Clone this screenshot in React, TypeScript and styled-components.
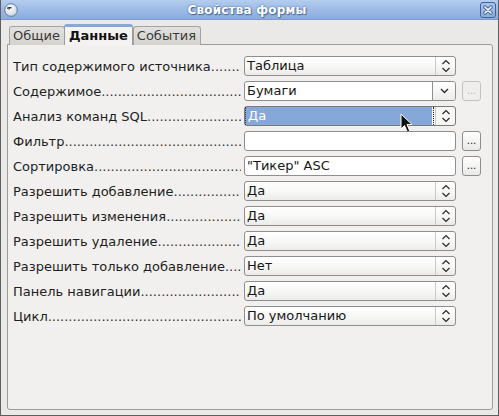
import React from "react"
import styled, { createGlobalStyle, css } from "styled-components"

const GlobalStyle = createGlobalStyle`
  html, body {
    margin: 0;
    padding: 0;
    background: #eae9e7;
  }
  body {
    font-family: "DejaVu Sans", "Liberation Sans", sans-serif;
  }
`

type Kind = "spin" | "combo" | "text" | "selected"

type Row = {
  label: string
  value: string
  kind: Kind
  button?: "on" | "off"
}

const rows: Row[] = [
  { label: "Тип содержимого источника", value: "Таблица", kind: "spin" },
  { label: "Содержимое", value: "Бумаги", kind: "combo", button: "off" },
  { label: "Анализ команд SQL", value: "Да", kind: "selected" },
  { label: "Фильтр", value: "", kind: "text", button: "on" },
  { label: "Сортировка", value: "\"Тикер\" ASC", kind: "text", button: "on" },
  { label: "Разрешить добавление", value: "Да", kind: "spin" },
  { label: "Разрешить изменения", value: "Да", kind: "spin" },
  { label: "Разрешить удаление", value: "Да", kind: "spin" },
  { label: "Разрешить только добавление", value: "Нет", kind: "spin" },
  { label: "Панель навигации", value: "Да", kind: "spin" },
  { label: "Цикл", value: "По умолчанию", kind: "spin" },
]

const SpinIcon = () => (
  <svg width="10" height="14" viewBox="0 0 10 14">
    <path d="M1.5 5 L5 1.5 L8.5 5" fill="none" stroke="#2a2a2a" strokeWidth="1.2" />
    <path d="M1.5 9 L5 12.5 L8.5 9" fill="none" stroke="#2a2a2a" strokeWidth="1.2" />
  </svg>
)

const DownIcon = () => (
  <svg width="9" height="6" viewBox="0 0 9 6">
    <path d="M1 1 L4.5 4.5 L8 1" fill="none" stroke="#2a2a2a" strokeWidth="1.3" />
  </svg>
)

const Cursor = () => (
  <svg width="14" height="21" viewBox="0 0 14 21">
    <path
      d="M1 1 L1 16 L4.5 12.5 L7.5 19.5 L10 18.5 L7 11.5 L12 11.5 Z"
      fill="#111"
      stroke="#fff"
      strokeWidth="1"
      strokeLinejoin="round"
    />
  </svg>
)

const App = () => {
  return (
    <>
      <GlobalStyle />
      <Window>
        <TitleBar>
          <AppIcon>
            <svg width="14" height="14" viewBox="0 0 14 14">
              <defs>
                <radialGradient id="g" cx="40%" cy="35%" r="70%">
                  <stop offset="0" stopColor="#ffffff" />
                  <stop offset="1" stopColor="#c9d4e2" />
                </radialGradient>
              </defs>
              <circle cx="7" cy="7" r="6.3" fill="url(#g)" stroke="#5a6f8f" strokeWidth="0.9" />
              <path d="M3 5.2 Q5 4.2 7.5 4.8" fill="none" stroke="#222" strokeWidth="1.2" />
              <path d="M4.5 6.2 L6 5.6" stroke="#222" strokeWidth="1" />
            </svg>
          </AppIcon>
          <Title>Свойства формы</Title>
          <CloseButton>
            <svg width="10" height="10" viewBox="0 0 10 10">
              <path d="M2 2 L8 8 M8 2 L2 8" stroke="#3c5f93" strokeWidth="3.2" strokeLinecap="round" />
              <path d="M2 2 L8 8 M8 2 L2 8" stroke="#fff" strokeWidth="1.6" strokeLinecap="round" />
            </svg>
          </CloseButton>
        </TitleBar>
        <Body>
          <Tabs>
            <Tab>Общие</Tab>
            <Tab $active>Данные</Tab>
            <Tab>События</Tab>
          </Tabs>
          <Panel>
            {rows.map((r) => (
              <FormRow key={r.label}>
                <Label>
                  <span>{r.label}</span>
                  <Dots>{".".repeat(120)}</Dots>
                </Label>
                <Control $kind={r.kind}>
                  <Value $kind={r.kind}>{r.value}</Value>
                  {(r.kind === "spin" || r.kind === "selected") && (
                    <Spin>
                      <SpinIcon />
                    </Spin>
                  )}
                  {r.kind === "combo" && (
                    <Drop>
                      <DownIcon />
                    </Drop>
                  )}
                  {r.kind === "selected" && (
                    <PointerWrap>
                      <Cursor />
                    </PointerWrap>
                  )}
                </Control>
                {r.button && <MoreButton $disabled={r.button === "off"}>...</MoreButton>}
              </FormRow>
            ))}
          </Panel>
        </Body>
      </Window>
    </>
  )
}

const Window = styled.div`
  width: 499px;
  height: 416px;
  box-sizing: border-box;
  border: 1px solid #5e5e5e;
  border-top: none;
  display: flex;
  flex-direction: column;
  background: #eae9e7;
`

const TitleBar = styled.div`
  height: 20px;
  display: flex;
  align-items: center;
  padding: 0 2px 0 3px;
  background: linear-gradient(#b4cdef, #9dbbe6 50%, #8aaddf);
  border-bottom: 1px solid #7d9bc8;
  box-sizing: border-box;
  position: relative;
`

const AppIcon = styled.div`
  width: 14px;
  height: 14px;
  display: flex;
`

const Title = styled.div`
  flex: 1;
  text-align: center;
  font-size: 12px;
  font-weight: bold;
  color: #ffffff;
  letter-spacing: 0.2px;
  text-shadow: 0 0 2px #3f6196, 1px 1px 1px #4b6c9f;
  padding-right: 4px;
`

const CloseButton = styled.div`
  width: 14px;
  height: 14px;
  border: 1px solid #3f6299;
  border-radius: 3px;
  background: linear-gradient(#a9c4ea, #8badde);
  display: flex;
  align-items: center;
  justify-content: center;
`

const Body = styled.div`
  flex: 1;
  display: flex;
  flex-direction: column;
  padding: 4px 5px 5px 6px;
`

const Tabs = styled.div`
  display: flex;
  align-items: flex-end;
  height: 21px;
  padding-left: 2px;
  position: relative;
  z-index: 1;
  margin-bottom: -1px;
`

const Tab = styled.div<{ $active?: boolean }>`
  font-size: 13px;
  color: #3a3a3a;
  height: 19px;
  line-height: 18px;
  padding: 0 4px 0 3px;
  box-sizing: border-box;
  border: 1px solid #a3a3a3;
  border-bottom: none;
  border-radius: 3px 3px 0 0;
  background: linear-gradient(#e2e1de, #d3d2ce);
  margin-right: -1px;
  ${(p) =>
    p.$active &&
    css`
      height: 21px;
      font-weight: bold;
      color: #111;
      background: #f4f3f1;
      border-color: #9a9a9a;
      border-top: 3px solid #88a8d8;
      line-height: 17px;
      padding: 0 4px 0 4px;
      margin-right: 0;
      position: relative;
      z-index: 2;
    `}
`

const Panel = styled.div`
  flex: 1;
  border: 1px solid #9b9b9b;
  border-radius: 0 3px 3px 3px;
  background: #f1f0ee;
  padding: 11px 0 0 5px;
  display: flex;
  flex-direction: column;
  gap: 5px;
`

const FormRow = styled.div`
  display: grid;
  grid-template-columns: 228px 212px 19px;
  column-gap: 3px;
  height: 20px;
  align-items: center;

  & > :nth-child(3) {
    margin-left: 3px;
  }
`

const Label = styled.div`
  display: flex;
  font-size: 13px;
  color: #1e1e1e;
  white-space: nowrap;
  overflow: hidden;

  & > span {
    flex: none;
  }
`

const Dots = styled.span`
  flex: 1;
  overflow: hidden;
  color: #333;
`

const Control = styled.div<{ $kind: Kind }>`
  position: relative;
  height: 20px;
  box-sizing: border-box;
  border: 1px solid #8e8e8e;
  border-radius: 3px;
  display: flex;
  align-items: stretch;
  background: linear-gradient(#ffffff, #f6f6f5 60%, #ebebea);
  ${(p) =>
    (p.$kind === "text" || p.$kind === "combo") &&
    css`
      background: #ffffff;
    `}
  ${(p) =>
    p.$kind === "selected" &&
    css`
      background: linear-gradient(90deg, #86a8d8 0, #86a8d8 187px, #f6f6f5 187px);
      border-color: #7a7a7a;
    `}
`

const Value = styled.div<{ $kind: Kind }>`
  flex: 1;
  font-size: 13px;
  line-height: 18px;
  padding-left: 2px;
  color: #161616;
  white-space: nowrap;
  overflow: hidden;
  ${(p) =>
    p.$kind === "selected" &&
    css`
      color: #ffffff;
      border-left: 1px dotted #333;
      border-right: 1px dotted #222;
      margin-right: 1px;
    `}
`

const Spin = styled.div`
  width: 19px;
  border-left: 1px solid #c9c9c7;
  display: flex;
  align-items: center;
  justify-content: center;
`

const Drop = styled.div`
  width: 22px;
  border-left: 1px solid #8e8e8e;
  background: linear-gradient(#ffffff, #ececeb);
  border-radius: 0 2px 2px 0;
  display: flex;
  align-items: center;
  justify-content: center;
`

const PointerWrap = styled.div`
  position: absolute;
  left: 155px;
  top: 6px;
  pointer-events: none;
`

const MoreButton = styled.div<{ $disabled?: boolean }>`
  width: 19px;
  height: 20px;
  box-sizing: border-box;
  border: 1px solid #8e8e8e;
  border-radius: 3px;
  background: linear-gradient(#ffffff, #e9e9e7);
  font-size: 10px;
  line-height: 18px;
  text-align: center;
  color: #222;
  overflow: hidden;
  ${(p) =>
    p.$disabled &&
    css`
      border-color: #c2c2c0;
      color: #b5b5b3;
      background: #efeeec;
    `}
`

export default App
